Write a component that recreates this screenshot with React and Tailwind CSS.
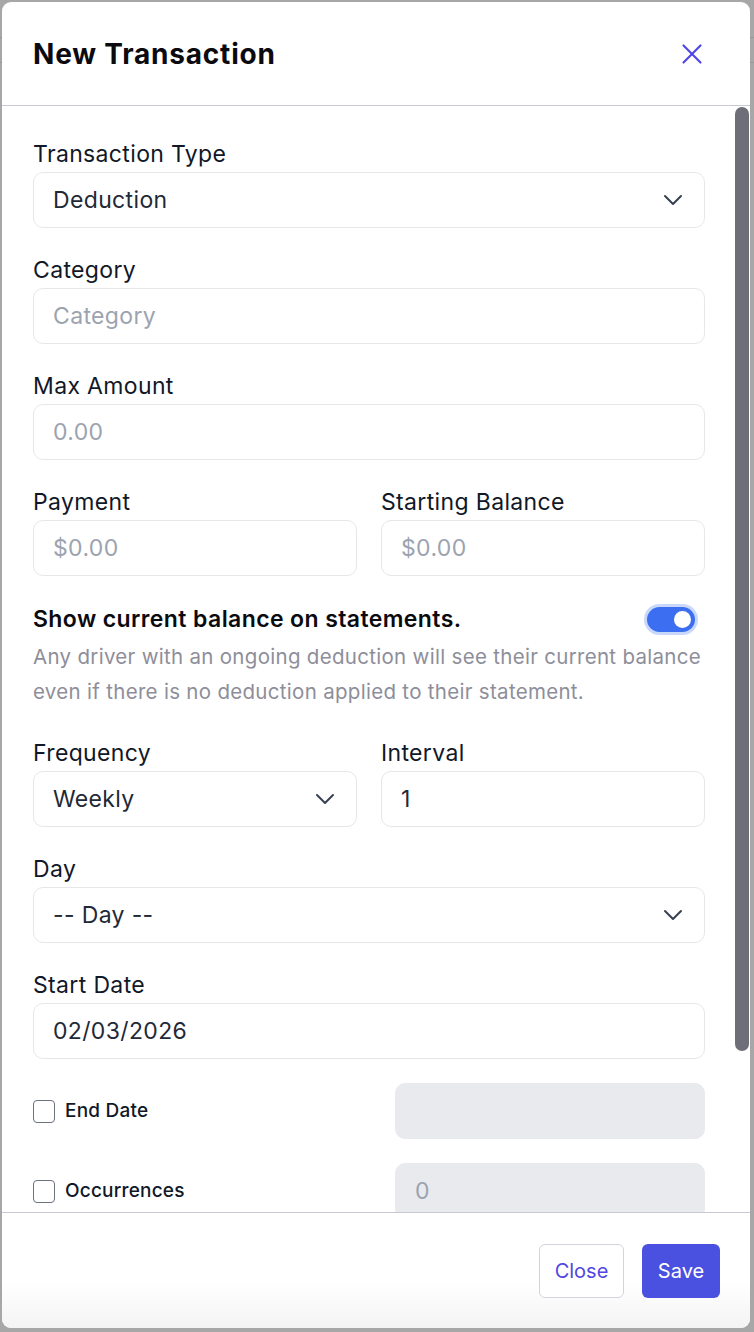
import { ChevronDown, X } from 'lucide-react';

const Label = ({ children }) => (
    <div className="mb-[4px] text-[23px] leading-[28px] tracking-[0.35px] text-[#111827]">{children}</div>
);

const Input = ({ value, placeholder, select, disabled, className = '' }) => (
    <div
        className={`flex h-[56px] items-center justify-between rounded-[10px] border pl-[19px] pr-[15px] text-[23px] tracking-[0.35px] ${
            disabled ? 'border-[#e9eaee] bg-[#e9eaee]' : 'border-[#e5e7eb] bg-white'
        } ${className}`}
    >
        {value ? (
            <span className="text-[#1f2937]">{value}</span>
        ) : (
            <span className="text-[#9ca3af]">{placeholder}</span>
        )}
        {select && <ChevronDown className="h-[32px] w-[32px] text-[#374151]" strokeWidth={1.5} />}
    </div>
);

const Field = ({ label, ...props }) => (
    <div className="mb-[28px]">
        <Label>{label}</Label>
        <Input {...props} />
    </div>
);

const CheckRow = ({ label, placeholder }) => (
    <div className="mb-[24px] flex items-center">
        <div className="flex flex-1 items-center gap-[10px]">
            <div className="h-[23px] w-[22px] rounded-[4px] border-[1.5px] border-[#6b7280] bg-white" />
            <span className="text-[19px] font-medium tracking-[0.2px] text-[#111827]">{label}</span>
        </div>
        <Input disabled placeholder={placeholder} className="w-[310px]" />
    </div>
);

export default function App() {
    return (
        <div
            className="relative h-[1332px] w-[754px] overflow-hidden bg-[#a7a7a7] pl-[2px] pt-[2px]"
            style={{ fontFamily: 'Inter, "Noto Sans", sans-serif' }}
        >
            {/* faint rows of the page behind */}
            <div className="absolute left-0 right-0 top-[37px] h-px bg-[#999]" />
            <div className="absolute left-0 right-0 top-[62px] h-px bg-[#999]" />

            <div className="relative flex h-[1326px] w-[748px] flex-col overflow-hidden rounded-[9px] bg-white">
                {/* Header */}
                <div className="flex h-[104px] shrink-0 items-center justify-between border-b border-[#c9c9d1] pl-[31px] pr-[41px]">
                    <h1 className="text-[28px] font-bold tracking-[0.8px] text-[#0b0b0f]">New Transaction</h1>
                    <X className="h-[34px] w-[34px] text-[#4f46e5]" strokeWidth={1.5} />
                </div>

                {/* Body */}
                <div className="relative flex-1 overflow-hidden">
                    <div className="pl-[31px] pr-[45px] pt-[34px]">
                        <Field label="Transaction Type" value="Deduction" select />
                        <Field label="Category" placeholder="Category" />
                        <Field label="Max Amount" placeholder="0.00" />

                        <div className="grid grid-cols-2 gap-x-[24px]">
                            <Field label="Payment" placeholder="$0.00" />
                            <Field label="Starting Balance" placeholder="$0.00" />
                        </div>

                        <div className="mb-[30px]">
                            <div className="flex h-[30px] items-center justify-between">
                                <span className="text-[23px] font-semibold tracking-[0.4px] text-[#0b0b0f]">
                                    Show current balance on statements.
                                </span>
                                <div className="mr-[7px] rounded-full bg-[#c9d7fb] p-[3px]">
                                    <div className="flex h-[25px] w-[48px] items-center justify-end rounded-full bg-[#3b6ef0] pr-[4px]">
                                        <div className="h-[17px] w-[17px] rounded-full bg-white" />
                                    </div>
                                </div>
                            </div>
                            <p className="mt-[5px] text-[20.5px] leading-[35px] tracking-[0.3px] text-[#8e8e9a]">
                                Any driver with an ongoing deduction will see their current balance even if there is no
                                deduction applied to their statement.
                            </p>
                        </div>

                        <div className="grid grid-cols-2 gap-x-[24px]">
                            <Field label="Frequency" value="Weekly" select />
                            <Field label="Interval" value="1" />
                        </div>

                        <Field label="Day" value="-- Day --" select />
                        <div className="mb-[24px]">
                            <Label>Start Date</Label>
                            <Input value="02/03/2026" />
                        </div>

                        <CheckRow label="End Date" />
                        <CheckRow label="Occurrences" placeholder="0" />
                    </div>

                    {/* scrollbar thumb */}
                    <div className="absolute right-[1px] top-[1px] h-[944px] w-[14px] rounded-full bg-[#6e6e78]" />
                </div>

                {/* Footer */}
                <div className="flex h-[116px] shrink-0 items-center justify-end gap-[18px] border-t border-[#c9c9d1] bg-gradient-to-b from-white from-60% to-[#f4f4f5] pr-[30px]">
                    <button className="h-[54px] w-[85px] rounded-[6px] border border-[#d1d5db] bg-white text-[20px] text-[#4f46e5]">
                        Close
                    </button>
                    <button className="h-[54px] w-[78px] rounded-[6px] bg-[#4a51e0] text-[20px] text-white">
                        Save
                    </button>
                </div>
            </div>
        </div>
    );
}
